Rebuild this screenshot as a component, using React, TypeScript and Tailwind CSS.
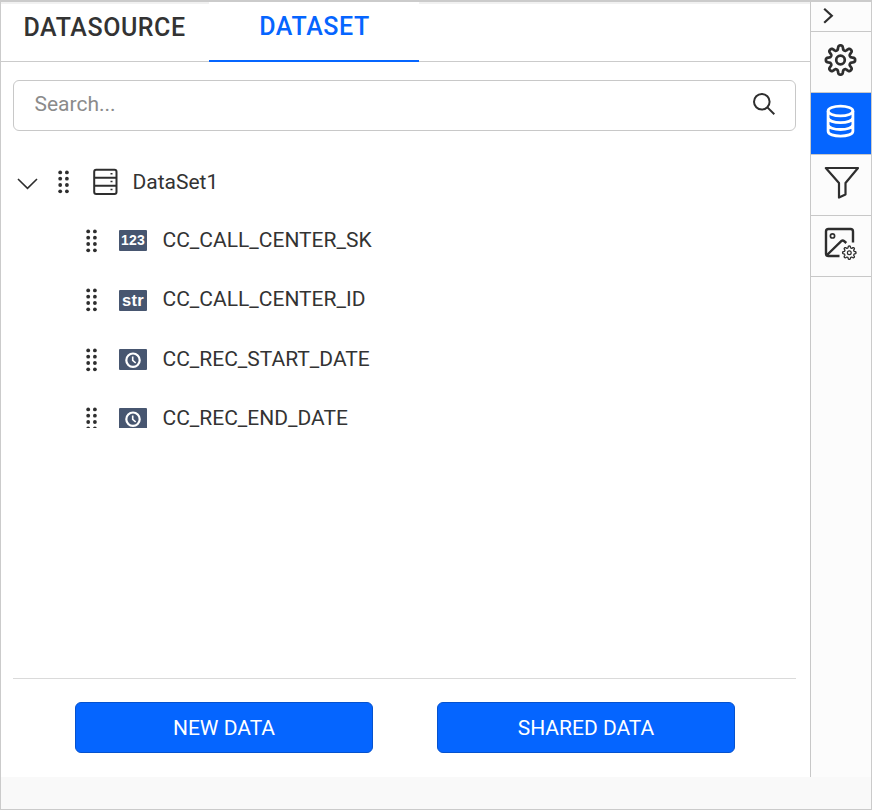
import React from "react";

const INK = "#2e2e2e";

function gearPath(cx: number, cy: number, base: number, depth: number, teeth = 8) {
  const steps = 192;
  const points: string[] = [];
  for (let i = 0; i < steps; i++) {
    const a = (i / steps) * Math.PI * 2;
    const r = base + (depth * Math.tanh(1.8 * Math.cos(teeth * a))) / Math.tanh(1.8);
    points.push(`${(cx + r * Math.cos(a)).toFixed(2)} ${(cy + r * Math.sin(a)).toFixed(2)}`);
  }
  return `M${points.join("L")}Z`;
}

function Grip() {
  return (
    <svg width="12" height="24" viewBox="0 0 12 24" className="shrink-0" fill={INK}>
      {[2.4, 8.7, 15, 21.3].map((y) => (
        <React.Fragment key={y}>
          <circle cx="3.2" cy={y} r="1.9" />
          <circle cx="9.9" cy={y} r="1.9" />
        </React.Fragment>
      ))}
    </svg>
  );
}

function TypeBadge({ kind }: { kind: string }) {
  return (
    <span className="flex h-[21px] w-7 shrink-0 items-center justify-center rounded-[1px] bg-[#475670] font-['Liberation_Sans',sans-serif] font-bold text-white">
      {kind === "date" ? (
        <svg width="18" height="18" viewBox="0 0 18 18" fill="none" stroke="white">
          <circle cx="9" cy="9.2" r="6.7" strokeWidth="2.2" />
          <path d="M8.7 5.5V9.3L11.7 12" strokeWidth="1.6" />
        </svg>
      ) : kind === "123" ? (
        <span className="text-[14px] leading-[21px] tracking-[0.2px]">123</span>
      ) : (
        <span className="text-[16.5px] leading-[19px] tracking-[0.3px]">str</span>
      )}
    </span>
  );
}

const fields = [
  { name: "CC_CALL_CENTER_SK", kind: "123", row: "h-[59px]", icons: "h-[59px]" },
  { name: "CC_CALL_CENTER_ID", kind: "str", row: "h-[60px]", icons: "h-[60px]" },
  { name: "CC_REC_START_DATE", kind: "date", row: "h-[59px]", icons: "h-[59px]" },
  { name: "CC_REC_END_DATE", kind: "date", row: "h-[59px]", icons: "h-[39px]" },
];

function Rail() {
  return (
    <aside className="flex w-[61px] shrink-0 flex-col border-l border-[#c8c8c8] bg-[#fcfcfc]">
      <button className="flex h-[30px] border-b border-[#c8c8c8]">
        <svg width="60" height="29" fill="none" stroke={INK} strokeWidth="2.2">
          <path d="M13.2 6.8L20.8 13.8L13.2 20.8" />
        </svg>
      </button>
      <button className="flex h-[61px] border-b border-[#c8c8c8]">
        <svg width="60" height="60" fill="none" stroke={INK} strokeWidth="2.7" strokeLinejoin="round">
          <path d={gearPath(29.5, 28, 12.4, 2.2)} />
          <circle cx="29.5" cy="28" r="4.3" />
        </svg>
      </button>
      <button className="flex h-[62px] border-b border-[#c8c8c8] bg-[#0565ff]">
        <svg width="60" height="61" fill="none" stroke="white" strokeWidth="2.8">
          <ellipse cx="29.5" cy="18" rx="12.4" ry="4.9" />
          <path d="M17.1 18V38.2C17.1 44.8 41.9 44.8 41.9 38.2V18M17.1 24.5C17.1 31.3 41.9 31.3 41.9 24.5M17.1 31.4C17.1 38.2 41.9 38.2 41.9 31.4" />
        </svg>
      </button>
      <button className="flex h-[61px] border-b border-[#c8c8c8]">
        <svg width="60" height="60" fill="none" stroke={INK} strokeWidth="2.2" strokeLinejoin="round">
          <path d="M14.8 13H47L34.5 28V39.5L28 42.5V28Z" />
        </svg>
      </button>
      <button className="flex h-[61px] border-b border-[#c8c8c8]">
        <svg width="60" height="60" fill="none" stroke={INK} strokeWidth="2.4">
          <path d="M42 26.5V15.5Q42 13 39.5 13H17.5Q15 13 15 15.5V37.5Q15 40 17.5 40H28.5M16 39L30.5 25Q31.7 24 33 25L35.3 27" />
          <circle cx="21.5" cy="19.9" r="2.1" strokeWidth="1.7" />
          <path d={gearPath(38.3, 36.7, 5.8, 0.9)} strokeWidth="1.3" />
          <circle cx="38.3" cy="36.7" r="1.9" strokeWidth="1.2" />
        </svg>
      </button>
    </aside>
  );
}

export default function App() {
  return (
    <div className="flex h-[810px] w-[872px] flex-col border border-t-2 border-[#cbcbcb] bg-[#f9f9f9] font-[Roboto,sans-serif] text-[#333]">
      <div className="flex h-[775px] bg-white">
        <main className="flex min-w-0 flex-1 flex-col">
          <nav className="flex h-[60px] shrink-0 border-b border-[#cbcbcb] text-[25px] font-medium">
            <button className="flex w-[208px] items-start border-t-2 border-[#f1f1f1] pt-[9px] pl-[22.5px] leading-[30px]">
              <span className="tracking-[0.55px]">DATASOURCE</span>
            </button>
            <button className="h-[60px] w-[210px] border-b-2 border-[#0565ff] pb-[8px] pl-px text-center leading-[30px] tracking-[0.6px] text-[#0565ff]">
              DATASET
            </button>
            <div className="flex-1 border-t-2 border-[#f1f1f1]" />
          </nav>
          <div className="mt-[18px] ml-3 flex h-[51px] w-[783px] shrink-0 items-center justify-between rounded-md border border-[#c8c8c8] pr-[19px] pl-[20.5px]">
            <span className="pb-[3px] text-[21px] leading-6 text-[#8b8b8b]">Search...</span>
            <svg width="24" height="24" viewBox="0 0 24 24" fill="none" stroke={INK} strokeWidth="2" className="mb-1">
              <circle cx="9.8" cy="9.8" r="7.8" />
              <path d="M15.4 15.4L22.3 22.3" />
            </svg>
          </div>
          <div className="mt-[22px] shrink-0">
            <div className="flex h-[58px] items-center pl-4">
              <svg width="22" height="14" viewBox="0 0 22 14" fill="none" stroke={INK} strokeWidth="1.6" className="mt-[3px]">
                <path d="M1 2L10.5 11.3L20 2" />
              </svg>
              <span className="ml-[18px] flex"><Grip /></span>
              <svg width="26" height="28" viewBox="0 0 26 28" fill="none" stroke={INK} strokeWidth="2" className="ml-[23px]">
                <rect x="2.2" y="1.8" width="22.3" height="24.3" rx="2" />
                <path d="M2.2 9.8H24.2M2.2 17.7H24.2" />
                <path d="M18.5 5.8H20.5M18.5 13.6H20.5M18.5 21.5H20.5" strokeWidth="1.5" />
              </svg>
              <span className="mt-[2px] ml-[14.5px] text-[21px]">DataSet1</span>
            </div>
            {fields.map((field) => (
              <div key={field.name} className={`flex items-center pl-[84px] ${field.row}`}>
                <div className={`flex self-start overflow-hidden ${field.icons}`}>
                  <div className={`flex items-center gap-[22px] ${field.row}`}>
                    <Grip />
                    <TypeBadge kind={field.kind} />
                  </div>
                </div>
                <span className="mb-[2px] ml-[15.5px] text-[21px] leading-6">{field.name}</span>
              </div>
            ))}
          </div>
          <div className="mx-3 mt-auto mb-[24px] flex h-[75px] w-[783px] shrink-0 justify-between border-t border-[#dadada] px-[62px] pt-[23px]">
            <button className="h-[51px] w-[298px] rounded-md border border-[#0552ce] bg-[#0565ff] pt-[2px] text-[21px] text-white">NEW DATA</button>
            <button className="mr-[-1px] h-[51px] w-[298px] rounded-md border border-[#0552ce] bg-[#0565ff] pt-[2px] text-[21px] text-white">SHARED DATA</button>
          </div>
        </main>
        <Rail />
      </div>
    </div>
  );
}
